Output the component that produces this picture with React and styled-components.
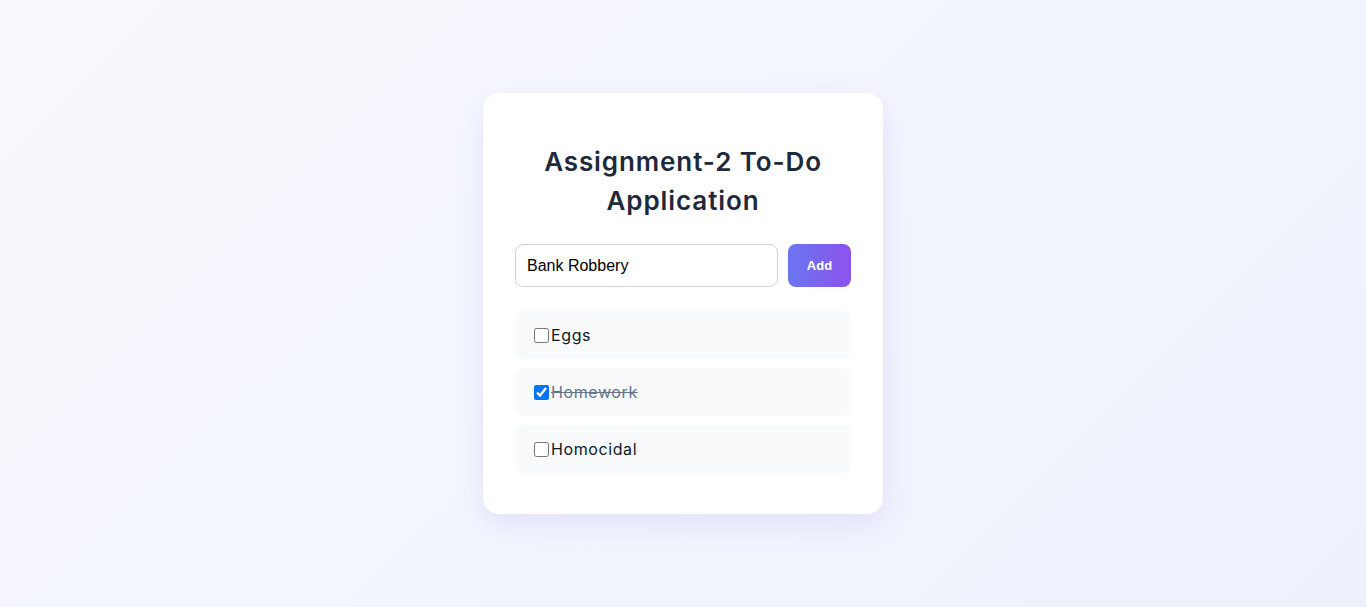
import React, { useState } from 'react';
import styled, { createGlobalStyle } from 'styled-components';

const GlobalStyle = createGlobalStyle`
  html, body {
    margin: 0;
    padding: 0;
  }
  body {
    font-family: "Inter", "Noto Sans", sans-serif;
    background: linear-gradient(135deg, #f8f9fe 0%, #eef1fc 100%);
    min-height: 100vh;
  }
`

const Page = styled.main`
  min-height: 607px;
  display: flex;
  align-items: center;
  justify-content: center;
`

const Card = styled.section`
  width: 400px;
  box-sizing: border-box;
  padding: 33px 32px 41px;
  background: #ffffff;
  border-radius: 16px;
  box-shadow: 0 10px 30px rgba(99, 102, 241, 0.12);
`

const Title = styled.h1`
  margin: 16px 0 24px;
  text-align: center;
  font-size: 26px;
  line-height: 39px;
  letter-spacing: 0.9px;
  font-weight: 600;
  color: #1e293b;
`

const Form = styled.form`
  display: flex;
  gap: 10px;
  margin-bottom: 24px;
`

const TaskInput = styled.input`
  flex: 1;
  height: 43px;
  box-sizing: border-box;
  padding: 0 11px;
  border: 1px solid #cbd5e1;
  border-radius: 8px;
  font-family: "Liberation Sans", Arial, sans-serif;
  font-size: 16px;
  color: #000;
  outline: none;
`

const AddButton = styled.button`
  width: 63px;
  height: 43px;
  border: none;
  border-radius: 8px;
  background: linear-gradient(90deg, #6b76f1 0%, #8b52ec 100%);
  color: #fff;
  font-family: "Liberation Sans", Arial, sans-serif;
  font-size: 13px;
  font-weight: 700;
  cursor: pointer;
`

const List = styled.ul`
  list-style: none;
  margin: 0;
  padding: 0;
  display: flex;
  flex-direction: column;
  gap: 9px;
`

const Item = styled.li`
  display: flex;
  align-items: center;
  padding: 12px 15px;
  background: #f8fafc;
  border-radius: 8px;
  font-size: 16px;
  line-height: 24px;
  letter-spacing: 0.6px;
  color: ${p => (p.done ? '#64748b' : '#0f172a')};
  text-decoration: ${p => (p.done ? 'line-through' : 'none')};
`

const Check = styled.input`
  width: 15px;
  height: 15px;
  margin: 3px 2px 3px 4px;
`

const App = () => {
  const [text, setText] = useState('Bank Robbery');
  const [todos, setTodos] = useState([
    { id: 1, label: 'Eggs', done: false },
    { id: 2, label: 'Homework', done: true },
    { id: 3, label: 'Homocidal', done: false },
  ]);

  const toggle = id =>
    setTodos(todos.map(t => (t.id === id ? { ...t, done: !t.done } : t)));

  const add = e => {
    e.preventDefault();
    if (!text.trim()) return;
    setTodos([...todos, { id: Date.now(), label: text, done: false }]);
    setText('');
  };

  return (
    <Page>
      <GlobalStyle />
      <Card>
        <Title>Assignment-2 To-Do<br />Application</Title>
        <Form onSubmit={add}>
          <TaskInput value={text} onChange={e => setText(e.target.value)} />
          <AddButton type="submit">Add</AddButton>
        </Form>
        <List>
          {todos.map(t => (
            <Item key={t.id} done={t.done}>
              <Check type="checkbox" checked={t.done} onChange={() => toggle(t.id)} />
              {t.label}
            </Item>
          ))}
        </List>
      </Card>
    </Page>
  );
};

export default App;
